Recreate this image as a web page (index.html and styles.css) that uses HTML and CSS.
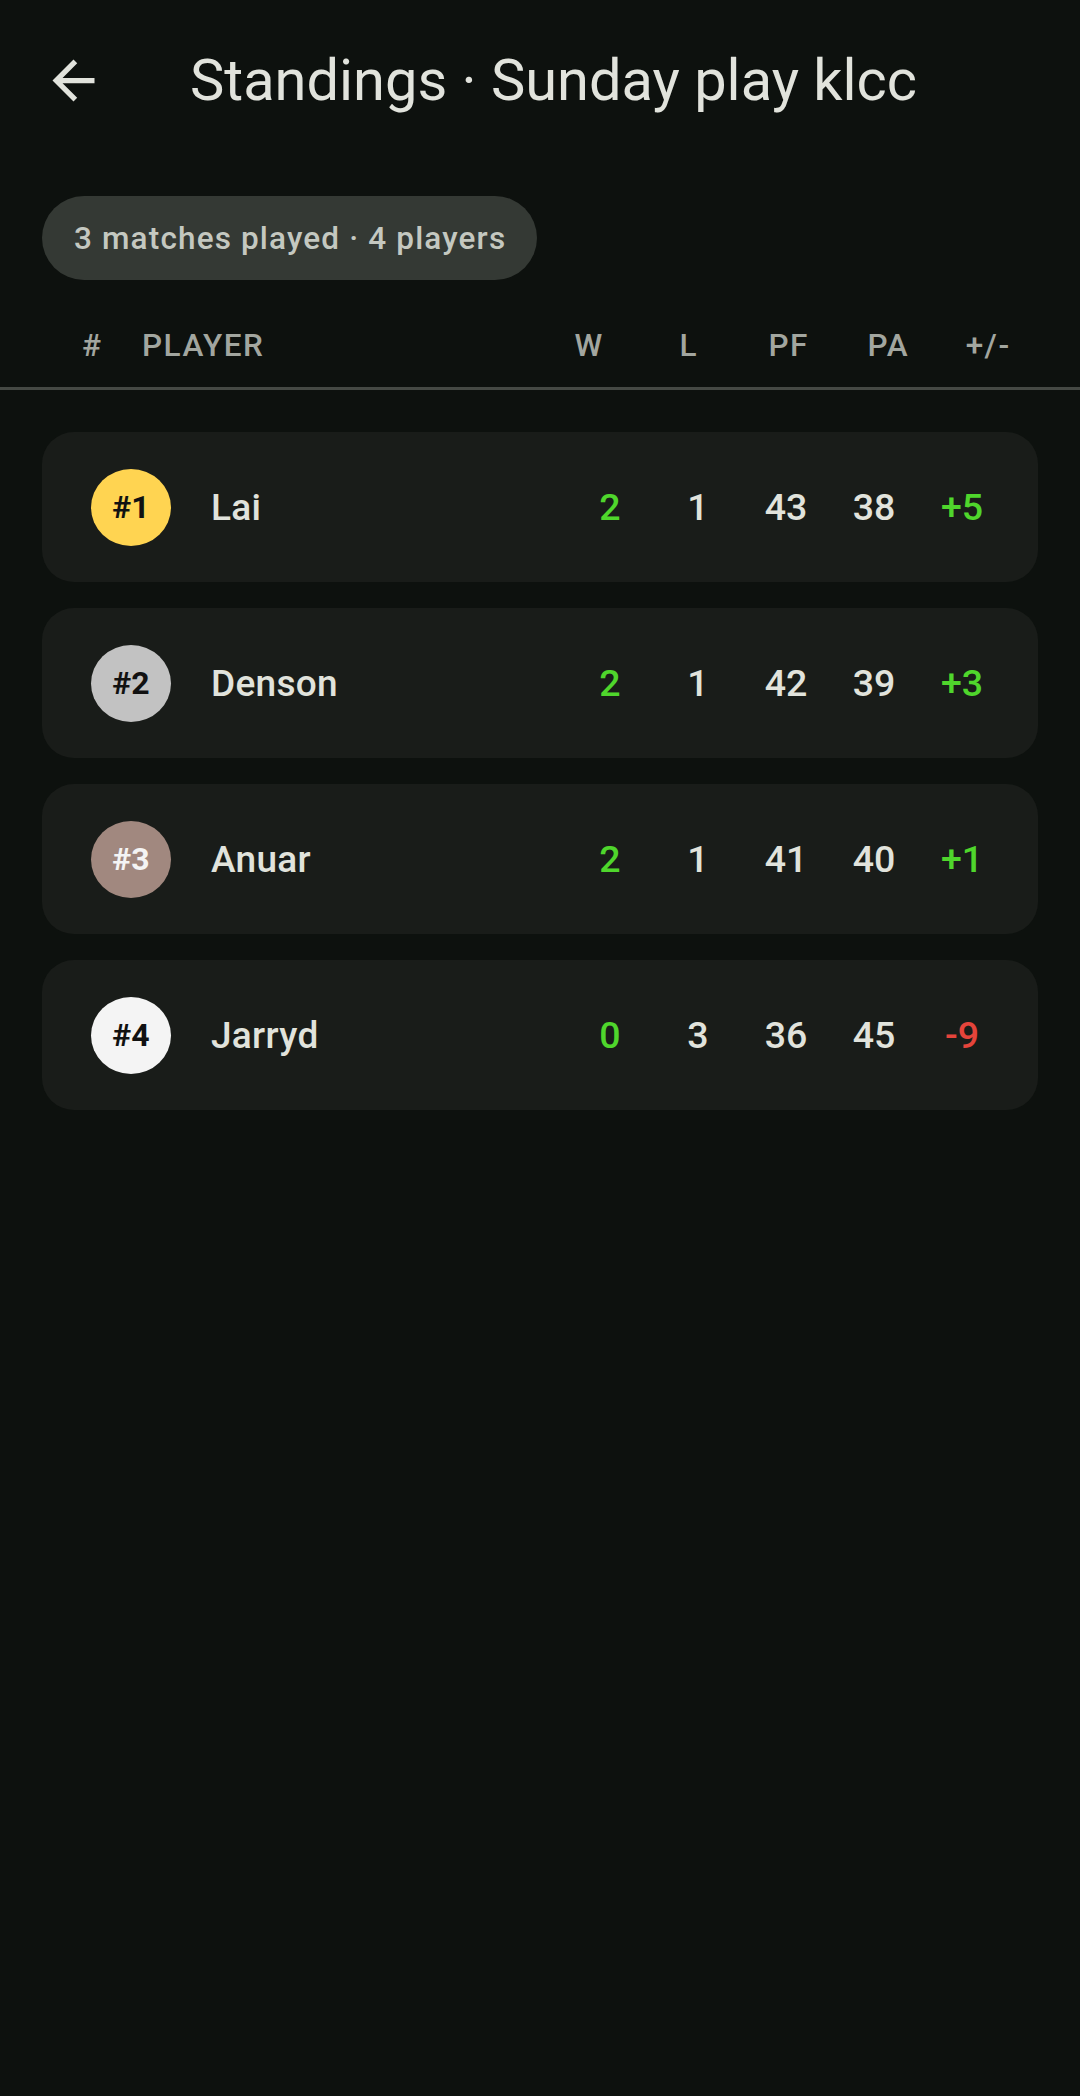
FILE: index.html
```html
<!DOCTYPE html>
<html lang="en">
<head>
<meta charset="utf-8">
<title>Standings</title>
<link rel="stylesheet" href="styles.css">
</head>
<body>
<header class="topbar">
  <span class="back">
    <svg viewBox="0 0 24 24" width="63" height="63"><path d="M20 11H7.83l5.59-5.59L12 4l-8 8 8 8 1.41-1.41L7.83 13H20v-2z" fill="#e1e3dc"/></svg>
  </span>
  <h1 class="title">Standings · Sunday play klcc</h1>
</header>

<div class="chip">3 matches played · 4 players</div>

<div class="thead">
  <span class="th-rank">#</span>
  <span class="th-player">PLAYER</span>
  <span class="th-col">W</span>
  <span class="th-col">L</span>
  <span class="th-col">PF</span>
  <span class="th-col">PA</span>
  <span class="th-col">+/-</span>
</div>

<main class="list">
  <div class="card">
    <span class="badge gold">#1</span>
    <span class="name">Lai</span>
    <span class="stat win">2</span>
    <span class="stat">1</span>
    <span class="stat">43</span>
    <span class="stat">38</span>
    <span class="stat pos">+5</span>
  </div>
  <div class="card">
    <span class="badge silver">#2</span>
    <span class="name">Denson</span>
    <span class="stat win">2</span>
    <span class="stat">1</span>
    <span class="stat">42</span>
    <span class="stat">39</span>
    <span class="stat pos">+3</span>
  </div>
  <div class="card">
    <span class="badge bronze">#3</span>
    <span class="name">Anuar</span>
    <span class="stat win">2</span>
    <span class="stat">1</span>
    <span class="stat">41</span>
    <span class="stat">40</span>
    <span class="stat pos">+1</span>
  </div>
  <div class="card">
    <span class="badge plain">#4</span>
    <span class="name">Jarryd</span>
    <span class="stat win">0</span>
    <span class="stat">3</span>
    <span class="stat">36</span>
    <span class="stat">45</span>
    <span class="stat neg">-9</span>
  </div>
</main>
</body>
</html>
```

FILE: styles.css
```css
* { box-sizing: border-box; }

html, body {
  margin: 0;
  padding: 0;
  background: #0d110e;
  color: #e1e3dc;
  font-family: Roboto, "Noto Sans", "Liberation Sans", sans-serif;
}

body { min-height: 2096px; }

.topbar {
  height: 161px;
  display: flex;
  align-items: center;
  padding-left: 42px;
}

.back {
  width: 63px;
  height: 63px;
  display: flex;
}

.title {
  margin: 0 0 0 85px;
  font-size: 57.75px;
  font-weight: 400;
  line-height: 1.17;
  color: #e1e3dc;
}

.chip {
  display: inline-flex;
  align-items: center;
  height: 84px;
  margin: 35px 0 0 42px;
  padding: 0 31px 0 32px;
  border-radius: 42px;
  background: #343934;
  color: #c4c8c0;
  font-size: 31.5px;
  font-weight: 500;
  letter-spacing: 1.15px;
}

.thead {
  display: flex;
  align-items: center;
  height: 87px;
  margin-top: 23px;
  padding: 0 42px 0 82px;
  border-bottom: 3px solid #454944;
  color: #a2a69f;
  font-size: 31.5px;
  font-weight: 500;
  letter-spacing: 1.5px;
}

.th-rank { width: 60px; }
.th-player { flex: 1; }
.th-col { width: 99.75px; text-align: center; }

.list {
  display: flex;
  flex-direction: column;
  gap: 26px;
  padding: 42px 42px 0;
}

.card {
  display: flex;
  align-items: center;
  height: 150px;
  padding: 0 32px 0 49px;
  border-radius: 32px;
  background: #191c19;
}

.badge {
  width: 80px;
  height: 77px;
  border-radius: 50%;
  display: flex;
  align-items: center;
  justify-content: center;
  font-size: 32px;
  font-weight: 700;
  color: #111;
}

.gold { background: #ffd451; }
.silver { background: #c2c2c2; }
.bronze { background: #a1887f; color: #f4f4f4; }
.plain { background: #f4f4f4; }

.name {
  flex: 1;
  margin-left: 40px;
  font-size: 37px;
  font-weight: 500;
  color: #e1e3dc;
  letter-spacing: 0.3px;
}

.stat {
  width: 88px;
  text-align: center;
  font-size: 37.5px;
  font-weight: 500;
  color: #e1e3dc;
}

.win, .pos { color: #4fd62c; }
.neg { color: #e5443b; }
```
